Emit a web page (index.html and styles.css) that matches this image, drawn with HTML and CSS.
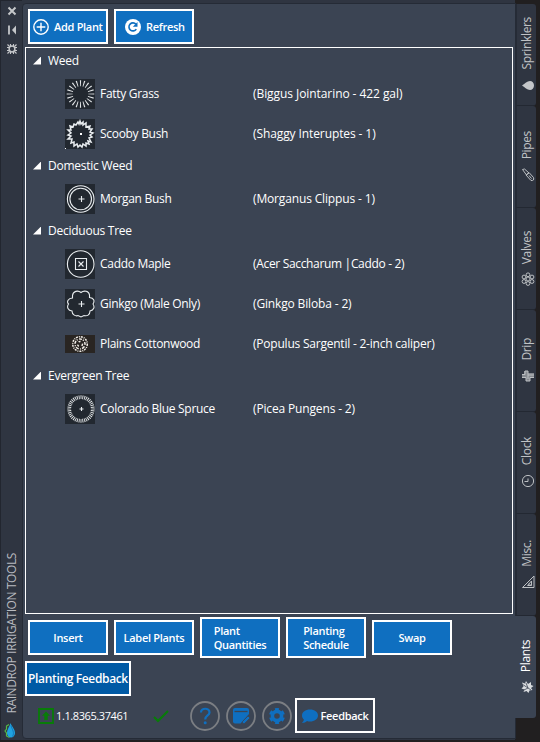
FILE: index.html
```html
<!DOCTYPE html>
<html lang="en">
<head>
<meta charset="utf-8">
<title>Raindrop Irrigation Tools</title>
<link rel="stylesheet" href="styles.css">
</head>
<body>
<div class="app">
  <aside class="rail">
    <svg class="rail-icons" width="22" height="60" viewBox="0 0 22 60" fill="none" stroke="#c5c7ca" stroke-width="2">
      <path d="M8.500 7.500l7 7M15.500 7.500l-7 7"/>
      <path d="M9 25.500v9" stroke-width="1.800"/><path d="M16 25.500v9l-4-4.500z" fill="#c5c7ca" stroke="none"/>
      <circle cx="12" cy="49" r="2.900" stroke-width="1.500"/><path d="M10.500 44v2.500M13.500 44v2.500M10.500 51.500V54M13.500 51.500V54M7 47.500h2.500M7 50.500h2.500M14.500 47.500H17M14.500 50.500H17M7.500 44.500l2 2M14.500 51.500l2 2M16.500 44.500l-2 2M9.500 51.500l-2 2" stroke-width="1.100"/>
    </svg>
    <div class="rail-title">RAINDROP IRRIGATION TOOLS</div>
    <svg class="drop" width="14" height="16" viewBox="0 0 14 16"><path d="M5 1.500L2.500 3v3L1 8l1.500 2v3l3 1.500" fill="none" stroke="#53b947" stroke-width="1.200"/><path d="M6.500 0C5.500 4 3 6 3 10a4 4.500 0 008 0C11 6 8 4 6.500 0z" fill="#20a2df"/><path d="M7 2.500c1 4 4 7 1.500 11" fill="none" stroke="#1378b9"/></svg>
  </aside>
  <main class="panel">
    <div class="toolbar">
      <button class="btn icon-btn"><svg width="16" height="16" viewBox="0 0 16 16" fill="none" stroke="#fff" stroke-width="1.400"><circle cx="8" cy="8" r="7.200"/><path d="M8 3.700v8.600M3.700 8h8.600"/></svg><span>Add Plant</span></button>
      <button class="btn icon-btn refresh"><svg width="16" height="16" viewBox="0 0 16 16"><circle cx="8" cy="8" r="8" fill="#fff"/><path d="M11.300 10.100A4 4 0 1111 5.300" fill="none" stroke="#0f6fc0" stroke-width="1.600"/><path d="M12.500 3v4.700H7.800z" fill="#0f6fc0"/></svg><span>Refresh</span></button>
    </div>
    <div class="tree">
      <div class="group"><i></i><span>Weed</span></div>
      <div class="item"><svg class="thumb" viewBox="0 0 30 30"><circle class="dashes" cx="15.500" cy="15" r="10.800" pathLength="200" stroke-width="6" stroke-dasharray="3 7" stroke-dashoffset="1.500"/></svg><span class="name">Fatty Grass</span><span class="latin l1">(Biggus Jointarino - 422 gal)</span></div>
      <div class="item"><svg class="thumb" viewBox="0 0 30 30"><path class="line heavy" d="M15 2l1 3 2-2 0 3 3-2 0 4 4-1-1 3 3 0-2 3 3 1-3 2 2 2-3 1 2 4-3-1 1 3-3-1 0 3-3-2-1 3-2-2-2 2-1-3-3 2 0-4-3 1 1-4-4 0 3-3-3-1 3-2-3-3 3 0-1-4 3 1 1-3 2 1 2-3 1 2z"/><path d="M15 14h2v2h-2zM0 29h1v1H0z" fill="#fff"/></svg><span class="name">Scooby Bush</span><span class="latin l2">(Shaggy Interuptes - 1)</span></div>
      <div class="group"><i></i><span>Domestic Weed</span></div>
      <div class="item"><svg class="thumb" viewBox="0 0 30 30"><circle class="line" cx="15.700" cy="15" r="13.300"/><circle class="line" cx="15.700" cy="15" r="10.800"/><path class="line" d="M16.500 12v6M13.500 15h6"/></svg><span class="name">Morgan Bush</span><span class="latin l3">(Morganus Clippus - 1)</span></div>
      <div class="group"><i></i><span>Deciduous Tree</span></div>
      <div class="item"><svg class="thumb" viewBox="0 0 30 30"><circle class="line" cx="15.700" cy="15" r="13.300"/><path class="line" d="M10.500 9.500h11v11h-11zM13.500 12.500l5 5M18.500 12.500l-5 5"/></svg><span class="name">Caddo Maple</span><span class="latin l4">(Acer Saccharum |Caddo - 2)</span></div>
      <div class="item"><svg class="thumb" viewBox="0 0 30 30"><path class="line" d="M16 3.500C13 1 8 2 7.500 6.500V9C3 9 1.500 13 3.500 15 1.500 18 3 21.500 7 22c0 4 4 5.500 6 4.500l3 1.500 3-1.500c3 1 6-.5 6-4.500 4-1 5-4 3-7 2-3 1-6-3.500-6.500V6C24 2 19 1 16 3.500zM16.500 12v6M13.500 15h6"/></svg><span class="name">Ginkgo (Male Only)</span><span class="latin l5">(Ginkgo Biloba - 2)</span></div>
      <div class="item"><svg class="thumb wide" viewBox="0 0 30 18"><g fill="none" stroke="#f3efe9" stroke-width="1.500"><circle cx="15" cy="9" r="7.300" stroke-dasharray="2 1 1 1"/><circle cx="15" cy="9" r="5" stroke-dasharray="1 1.500 3 1"/><circle cx="15" cy="9" r="2.500" stroke-dasharray="2 3"/></g></svg><span class="name">Plains Cottonwood</span><span class="latin l6">(Populus Sargentil - 2-inch caliper)</span></div>
      <div class="group"><i></i><span>Evergreen Tree</span></div>
      <div class="item"><svg class="thumb" viewBox="0 0 30 30"><circle class="dashes" cx="16" cy="15" r="11.800" pathLength="200" stroke-width="3.800" stroke-dasharray="2.500 2.500" stroke-dashoffset="1.250"/><path class="line" d="M16.500 13v4M14.500 15h4"/></svg><span class="name">Colorado Blue Spruce</span><span class="latin l7">(Picea Pungens - 2)</span></div>
    </div>
    <div class="actions">
      <button class="btn">Insert</button>
      <button class="btn">Label Plants</button>
      <button class="btn tall"><span>Plant<br>Quantities</span></button>
      <button class="btn tall"><span>Planting<br>Schedule</span></button>
      <button class="btn">Swap</button>
    </div>
    <button class="btn planting">Planting Feedback</button>
    <footer class="footer">
      <svg class="update" width="16" height="16" viewBox="0 0 16 16"><path d="M1 1h14v14H1z" fill="none" stroke="#087c08" stroke-width="1.800"/><path d="M8 3.500l4 4.300H9.700V12H6.300V7.800H4z" fill="#087c08"/></svg>
      <span class="version">1.1.8365.37461</span>
      <svg class="check" width="16" height="14" viewBox="0 0 16 14"><path d="M1 8l4 4L15 2" fill="none" stroke="#087c08" stroke-width="2"/></svg>
      <div class="rounds">
        <svg width="30" height="30" viewBox="0 0 30 30"><circle class="ring" cx="15" cy="15" r="14"/><path d="M11 11.500c0-5 8.500-5 8.500 0 0 3-4.300 3-4.300 7" fill="none" stroke="#0f6fc0" stroke-width="2.200"/><circle cx="15.200" cy="21.700" r="1.500" fill="#0f6fc0"/></svg>
        <svg width="30" height="30" viewBox="0 0 30 30"><circle class="ring" cx="15" cy="15" r="14"/><path d="M7 9q0-2 2-2h12q2 0 2 2v4l-8.500 9.500H9q-2 0-2-2z" fill="#0f6fc0"/><path d="M8.500 10.500h13" stroke="#3b4453" stroke-width="1.300"/><path d="M16.500 22.500v-2l5.500-5.500 2 2-5.500 5.500z" fill="#0f6fc0" stroke="#3b4453" stroke-width=".7"/></svg>
        <svg width="30" height="30" viewBox="0 0 30 30"><circle class="ring" cx="15" cy="15" r="14"/><circle cx="15" cy="15" r="4.600" fill="none" stroke="#0f6fc0" stroke-width="3.600"/><circle cx="15" cy="15" r="6.700" pathLength="60" fill="none" stroke="#0f6fc0" stroke-width="2.600" stroke-dasharray="5.500 4.500" stroke-dashoffset="-2.200"/></svg>
      </div>
      <button class="btn feedback"><svg width="16" height="16" viewBox="0 0 16 16"><path d="M8 1.500c4.500 0 8 2.500 8 6s-3.500 6-8 6c-1 0-2-.1-3-.5-1 1.300-3 2-5 2 1-1 1.800-2.300 1.900-3.400C.7 10.600 0 9 0 7.500c0-3.500 3.500-6 8-6z" fill="#0f6fc0"/></svg><span>Feedback</span></button>
    </footer>
  </main>
  <nav class="tabs">
    <div class="tab"><svg width="14" height="14" viewBox="0 0 14 14"><path d="M1 7.500C4 5.500 6 3 9 3a4 4.500 0 010 9C6 12 4 9.500 1 7.500z" fill="#c4c6c9"/></svg><span>Sprinklers</span></div>
    <div class="tab"><svg width="14" height="14" viewBox="0 0 14 14"><path class="ti" d="M1.500 1.500l2-.5 4.500 4-2.500 2zM5 7l3-2.500 4.500 5q1 3.500-2.500 3zM8 7.500l2.500 3"/></svg><span>Pipes</span></div>
    <div class="tab"><svg width="14" height="14" viewBox="0 0 14 14"><g class="ti"><circle cx="7" cy="7" r="2"/><circle cx="7" cy="2.800" r="1.900"/><circle cx="11" cy="5" r="1.900"/><circle cx="11" cy="9.500" r="1.900"/><circle cx="7" cy="11.500" r="1.900"/><circle cx="3" cy="9.500" r="1.900"/><circle cx="3" cy="5" r="1.900"/></g></svg><span>Valves</span></div>
    <div class="tab"><svg width="14" height="14" viewBox="0 0 14 14"><path d="M3 2h4v2h6v4H9v4H5V9H1V6h2z" fill="#85898f"/><path class="ti" d="M1 5.500h3V2h3v4h6M1 8.500h4V12h4V8.500h4M7 6v4"/></svg><span>Drip</span></div>
    <div class="tab"><svg width="14" height="14" viewBox="0 0 14 14"><circle class="ti" cx="7" cy="7" r="5.600"/><path class="ti" d="M3.500 7.500H7V4.500"/></svg><span>Clock</span></div>
    <div class="tab"><svg width="14" height="14" viewBox="0 0 14 14"><path class="ti" d="M1.500 12.500h11.500V1zM6.500 10.500h4V6zM8 8.500l2 2"/></svg><span>Misc.</span></div>
    <div class="tab active"><svg width="14" height="14" viewBox="0 0 14 14"><path d="M2 2.500l3 1L6 1l2 3 3-2v3l2.500 1L11 8l1.500 2-3 .5-1 2.500-2-2-3 1 1-2.500-3-1 2-2z" fill="#d9dcdf"/><path d="M2 4l9 6M6 3l2 5-4 2" stroke="#3b4453" stroke-width=".8" fill="none"/></svg><span>Plants</span></div>
  </nav>
</div>
</body>
</html>
```
FILE: styles.css
```css
* { box-sizing: border-box; }
body { margin: 0; width: 540px; height: 742px; overflow: hidden; background: #211f20; color: #fff; font: 12px/16px "Open Sans", "Noto Sans", sans-serif; }
svg { display: block; flex: none; }
.app { display: flex; width: 540px; height: 742px; background: linear-gradient(90deg, #2f3541 0 515px, transparent 515px) 0 0 / 100% 740px no-repeat; }
.rail { width: 22px; height: 740px; display: flex; flex-direction: column; background: #2f3541; border-left: 1px solid #22262f; border-top: 1px solid #22262f; }
.rail-icons { margin: -1px 0 0 -1px; }
.rail-title { margin: auto 0 9px; width: 22px; writing-mode: vertical-rl; transform: rotate(180deg); line-height: 22px; color: #b9bbc0; font-size: 12px; letter-spacing: -.4px; }
.drop { margin: 0 0 1px 3px; }
.panel { width: 494px; height: 736px; margin-top: 3px; border: 1px solid #252b36; border-radius: 4px 0 0 4px; background: #3b4453; padding: 5px 2px 0; }
.toolbar { display: flex; gap: 6px; padding-left: 3px; height: 38px; }
.btn { width: 80px; height: 35px; border: 2px solid #fff; padding: 0; background: #0f6fc0; color: #fff; font: 600 11px/14px "Open Sans", "Noto Sans", sans-serif; letter-spacing: -.3px; display: flex; align-items: center; justify-content: center; white-space: nowrap; flex: none; }
.icon-btn { gap: 5px; justify-content: flex-start; padding-left: 3px; }
.refresh { padding-left: 9px; gap: 5px; }
.tree { width: 488px; height: 567px; border: 1px solid #fff; padding-top: 1px; }
.group { height: 25px; display: flex; align-items: center; padding: 0 0 2px 7px; letter-spacing: -.25px; }
.group i { width: 8px; height: 8px; margin-right: 7px; background: #fff; clip-path: polygon(100% 0, 100% 100%, 0 100%); }
.item { height: 40px; display: grid; grid-template-columns: 30px 148px 1fr; column-gap: 5px; align-items: center; padding-left: 39px; white-space: nowrap; }
.name { letter-spacing: -.3px; }
.latin { letter-spacing: -.15px; }
.l1 { letter-spacing: -.07px; }
.l2 { letter-spacing: -.1px; }
.l4 { letter-spacing: -.33px; }
.l6 { letter-spacing: -.22px; }
.thumb { width: 30px; height: 30px; background: #222830; }
.thumb.wide { height: 18px; background: #292522; }
.line { fill: none; stroke: #e9edf0; stroke-width: 1.1; }
.heavy { stroke-width: 1.5; }
.dashes { fill: none; stroke: #e3e6e8; }
.actions { display: flex; align-items: center; gap: 6px; height: 41px; margin: 3px 0 3px 3px; }
.tall { height: 41px; text-align: left; }
.planting { width: 106px; background: #005aa5; font-size: 12px; letter-spacing: -.35px; }
.footer { display: flex; align-items: center; height: 39px; padding-left: 13px; }
.version { width: 97px; margin-left: 2px; font-size: 11px; letter-spacing: -.4px; }
.rounds { display: flex; gap: 6px; margin: 0 3px 0 21px; }
.ring { fill: none; stroke: #7b7e83; stroke-width: 1.8; }
.feedback { background: transparent; gap: 3px; }
.tabs { width: 20px; margin-top: 4px; }
.tab { height: 102px; background: #2f3541; border-bottom: 1px solid #232832; border-left: 1px solid #252b36; border-radius: 0 3px 3px 0; display: flex; flex-direction: column-reverse; align-items: center; justify-content: center; gap: 8px; color: #c0c2c5; letter-spacing: -.35px; }
.tab span { writing-mode: vertical-rl; transform: rotate(180deg); line-height: 20px; width: 20px; }
.tab svg { margin-left: 2px; }
.active { background: #3b4453; color: #fff; margin-left: -1px; width: 21px; border: 0; }
.ti { fill: none; stroke: #bcbfc2; stroke-width: 1; }
```
